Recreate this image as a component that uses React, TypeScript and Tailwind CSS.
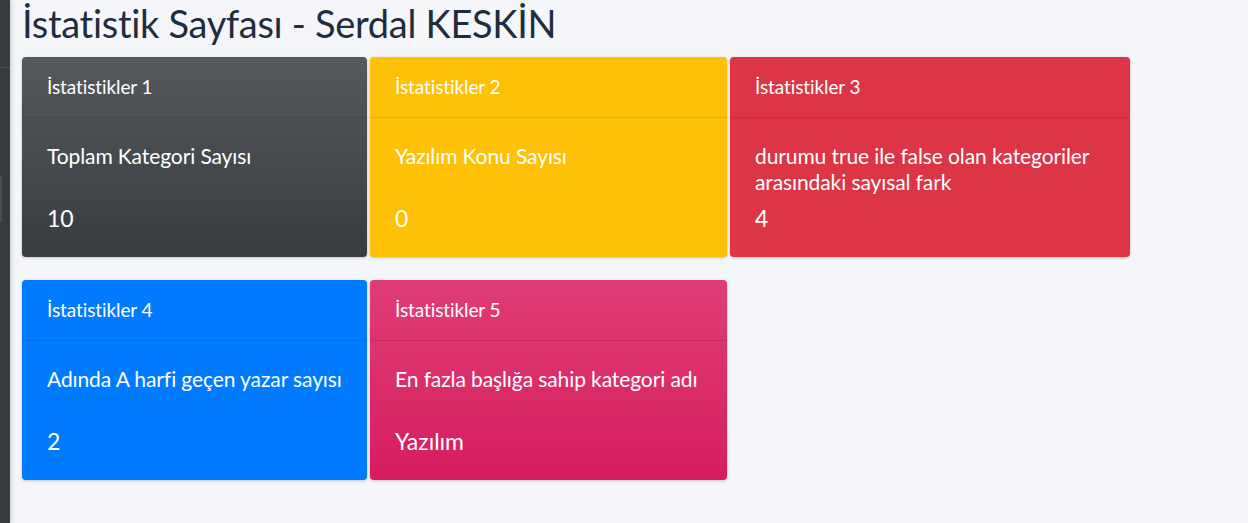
import React from 'react';

type Stat = {
  label: string;
  title: string;
  value: string;
  bg: string;
  width: string;
};

const row1: Stat[] = [
  { label: 'İstatistikler 1', title: 'Toplam Kategori Sayısı', value: '10', bg: 'bg-gradient-to-b from-[#55595e] to-[#383c41]', width: 'w-[345px]' },
  { label: 'İstatistikler 2', title: 'Yazılım Konu Sayısı', value: '0', bg: 'bg-[#ffc107]', width: 'w-[357px]' },
  { label: 'İstatistikler 3', title: 'durumu true ile false olan kategoriler arasındaki sayısal fark', value: '4', bg: 'bg-[#dc3545]', width: 'w-[400px]' },
];

const row2: Stat[] = [
  { label: 'İstatistikler 4', title: 'Adında A harfi geçen yazar sayısı', value: '2', bg: 'bg-[#007bff]', width: 'w-[345px]' },
  { label: 'İstatistikler 5', title: 'En fazla başlığa sahip kategori adı', value: 'Yazılım', bg: 'bg-gradient-to-b from-[#df3c76] to-[#d61b5f]', width: 'w-[357px]' },
];

function StatCard({ s }: { s: Stat }) {
  return (
    <div className={`${s.width} h-[200px] rounded-[4px] text-white shadow-[0_0_1px_rgba(0,0,0,0.125),0_1px_3px_rgba(0,0,0,0.2)] ${s.bg}`}>
      <div className="h-[61px] flex items-center px-[25px] border-b border-black/10 text-[19px] tracking-[-0.1px]">
        {s.label}
      </div>
      <div className="pl-[25px] pr-[12px] pt-[25px]">
        <div className="h-[52px] text-[21px] leading-[26px] tracking-[-0.1px]">{s.title}</div>
        <div className="mt-[10px] text-[23px] leading-[26px]">{s.value}</div>
      </div>
    </div>
  );
}

export default function App() {
  return (
    <div className="flex min-h-[523px] bg-[#f4f6f9] font-['Lato','Noto_Sans',sans-serif]">
      {/* sidebar edge */}
      <div className="w-[10px] shrink-0 bg-[#343a40] shadow-[2px_0_4px_rgba(0,0,0,0.15)] flex flex-col">
        <div className="h-[68px] border-b border-[#4b545c]" />
        <div className="mt-[108px] h-[46px] w-[2px] bg-[#454b51]" />
      </div>

      <div className="flex-1 pl-[12px]">
        <h1 className="text-[38px] leading-[44px] text-[#1f2d3d] pt-[1px] tracking-[-0.3px]">İstatistik Sayfası - Serdal KESKİN</h1>
        <div className="mt-[12px] flex gap-[3px]">
          {row1.map((s) => (
            <StatCard key={s.label} s={s} />
          ))}
        </div>
        <div className="mt-[23px] flex gap-[3px]">
          {row2.map((s) => (
            <StatCard key={s.label} s={s} />
          ))}
        </div>
      </div>
    </div>
  );
}
